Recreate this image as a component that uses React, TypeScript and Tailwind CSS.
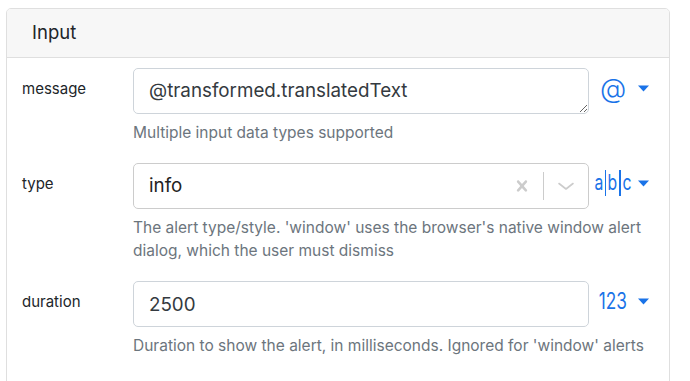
import type { ReactNode } from 'react'

const font = { fontFamily: 'Inter, "Noto Sans", sans-serif' }

function Caret() {
  return (
    <svg width="11" height="7" viewBox="0 0 11 7" className="ml-[10px]">
      <path d="M0 0.5 L11 0.5 L5.5 6.5 Z" fill="#1a73e8" />
    </svg>
  )
}

function TypeBadge({ children }: { children: ReactNode }) {
  return (
    <div className="flex h-[40px] items-center">
      <div className="ml-[9px] flex w-[30px] justify-center text-[#1a73e8]">{children}</div>
      <Caret />
    </div>
  )
}

function Row({
  label,
  help,
  badge,
  children,
}: {
  label: string
  help: string
  badge: ReactNode
  children: ReactNode
}) {
  return (
    <div>
      <div className="flex items-start">
        <div className="w-[111px] shrink-0 pt-[10px] text-[15px] leading-[22px] text-[#212529]">{label}</div>
        <div className="w-[456px] shrink-0">{children}</div>
        <TypeBadge>{badge}</TypeBadge>
      </div>
      <p className="mt-[7px] ml-[111px] w-[522px] text-[15.5px] leading-[23px] text-[#6c757d]">{help}</p>
    </div>
  )
}

function ClearIcon() {
  return (
    <svg width="22" height="22" viewBox="0 0 20 20" fill="#cccccc">
      <path d="M14.348 14.849c-0.469 0.469-1.229 0.469-1.697 0l-2.651-3.030-2.651 3.029c-0.469 0.469-1.229 0.469-1.697 0-0.469-0.469-0.469-1.229 0-1.697l2.758-3.15-2.759-3.152c-0.469-0.469-0.469-1.228 0-1.697s1.228-0.469 1.697 0l2.652 3.031 2.651-3.031c0.469-0.469 1.228-0.469 1.697 0s0.469 1.229 0 1.697l-2.758 3.152 2.758 3.15c0.469 0.469 0.469 1.229 0 1.698z" />
    </svg>
  )
}

function ChevronIcon() {
  return (
    <svg width="20" height="20" viewBox="0 0 20 20" fill="none" stroke="#cccccc" strokeWidth="1.6" strokeLinecap="round" strokeLinejoin="round">
      <path d="M3 7.5 L10 13 L17 7.5" />
    </svg>
  )
}

export default function App() {
  return (
    <div className="min-h-screen bg-white pt-2" style={font}>
      <div className="ml-[6px] h-[420px] w-[664px] overflow-hidden rounded-[5px] border border-[#dfdfdf]">
        <div className="flex h-[49px] items-center border-b border-[#dfdfdf] bg-[#f7f7f7] px-[25px] text-[18.5px] text-[#212529]">
          Input
        </div>
        <div className="flex flex-col gap-[19px] pt-[10px] pl-[15px]">
          <Row
            label="message"
            help="Multiple input data types supported"
            badge={<span className="text-[27px] font-light leading-none">@</span>}
          >
            <textarea
              defaultValue="@transformed.translatedText"
              rows={1}
              className="block h-[46px] w-full rounded-[5px] border border-[#ced4da] px-[15px] py-[8px] text-[18.8px] leading-[28px] text-[#343a40] outline-none"
            />
          </Row>
          <Row
            label="type"
            help="The alert type/style. 'window' uses the browser's native window alert dialog, which the user must dismiss"
            badge={
              <span className="flex h-[26px] items-stretch text-[21px] leading-[26px]">
                <span className="inline-block scale-x-75">a</span>
                <span className="w-[1.5px] bg-[#1a73e8]" />
                <span className="inline-block scale-x-75">b</span>
                <span className="w-[1.5px] bg-[#1a73e8]" />
                <span className="inline-block scale-x-75">c</span>
              </span>
            }
          >
            <div className="flex h-[46px] items-center rounded-[5px] border border-[#cccccc]">
              <div className="flex-1 pl-[15px] text-[18.8px] text-[#222222]">info</div>
              <div className="px-[10px]">
                <ClearIcon />
              </div>
              <div className="h-[28px] w-px bg-[#cccccc]" />
              <div className="pl-[12px] pr-[12px]">
                <ChevronIcon />
              </div>
            </div>
          </Row>
          <Row
            label="duration"
            help="Duration to show the alert, in milliseconds. Ignored for 'window' alerts"
            badge={<span className="inline-block scale-x-75 text-[23px] leading-none">123</span>}
          >
            <input
              defaultValue="2500"
              className="block h-[46px] w-full rounded-[5px] border border-[#ced4da] px-[15px] text-[18.8px] text-[#343a40] outline-none"
            />
          </Row>
        </div>
      </div>
    </div>
  )
}
